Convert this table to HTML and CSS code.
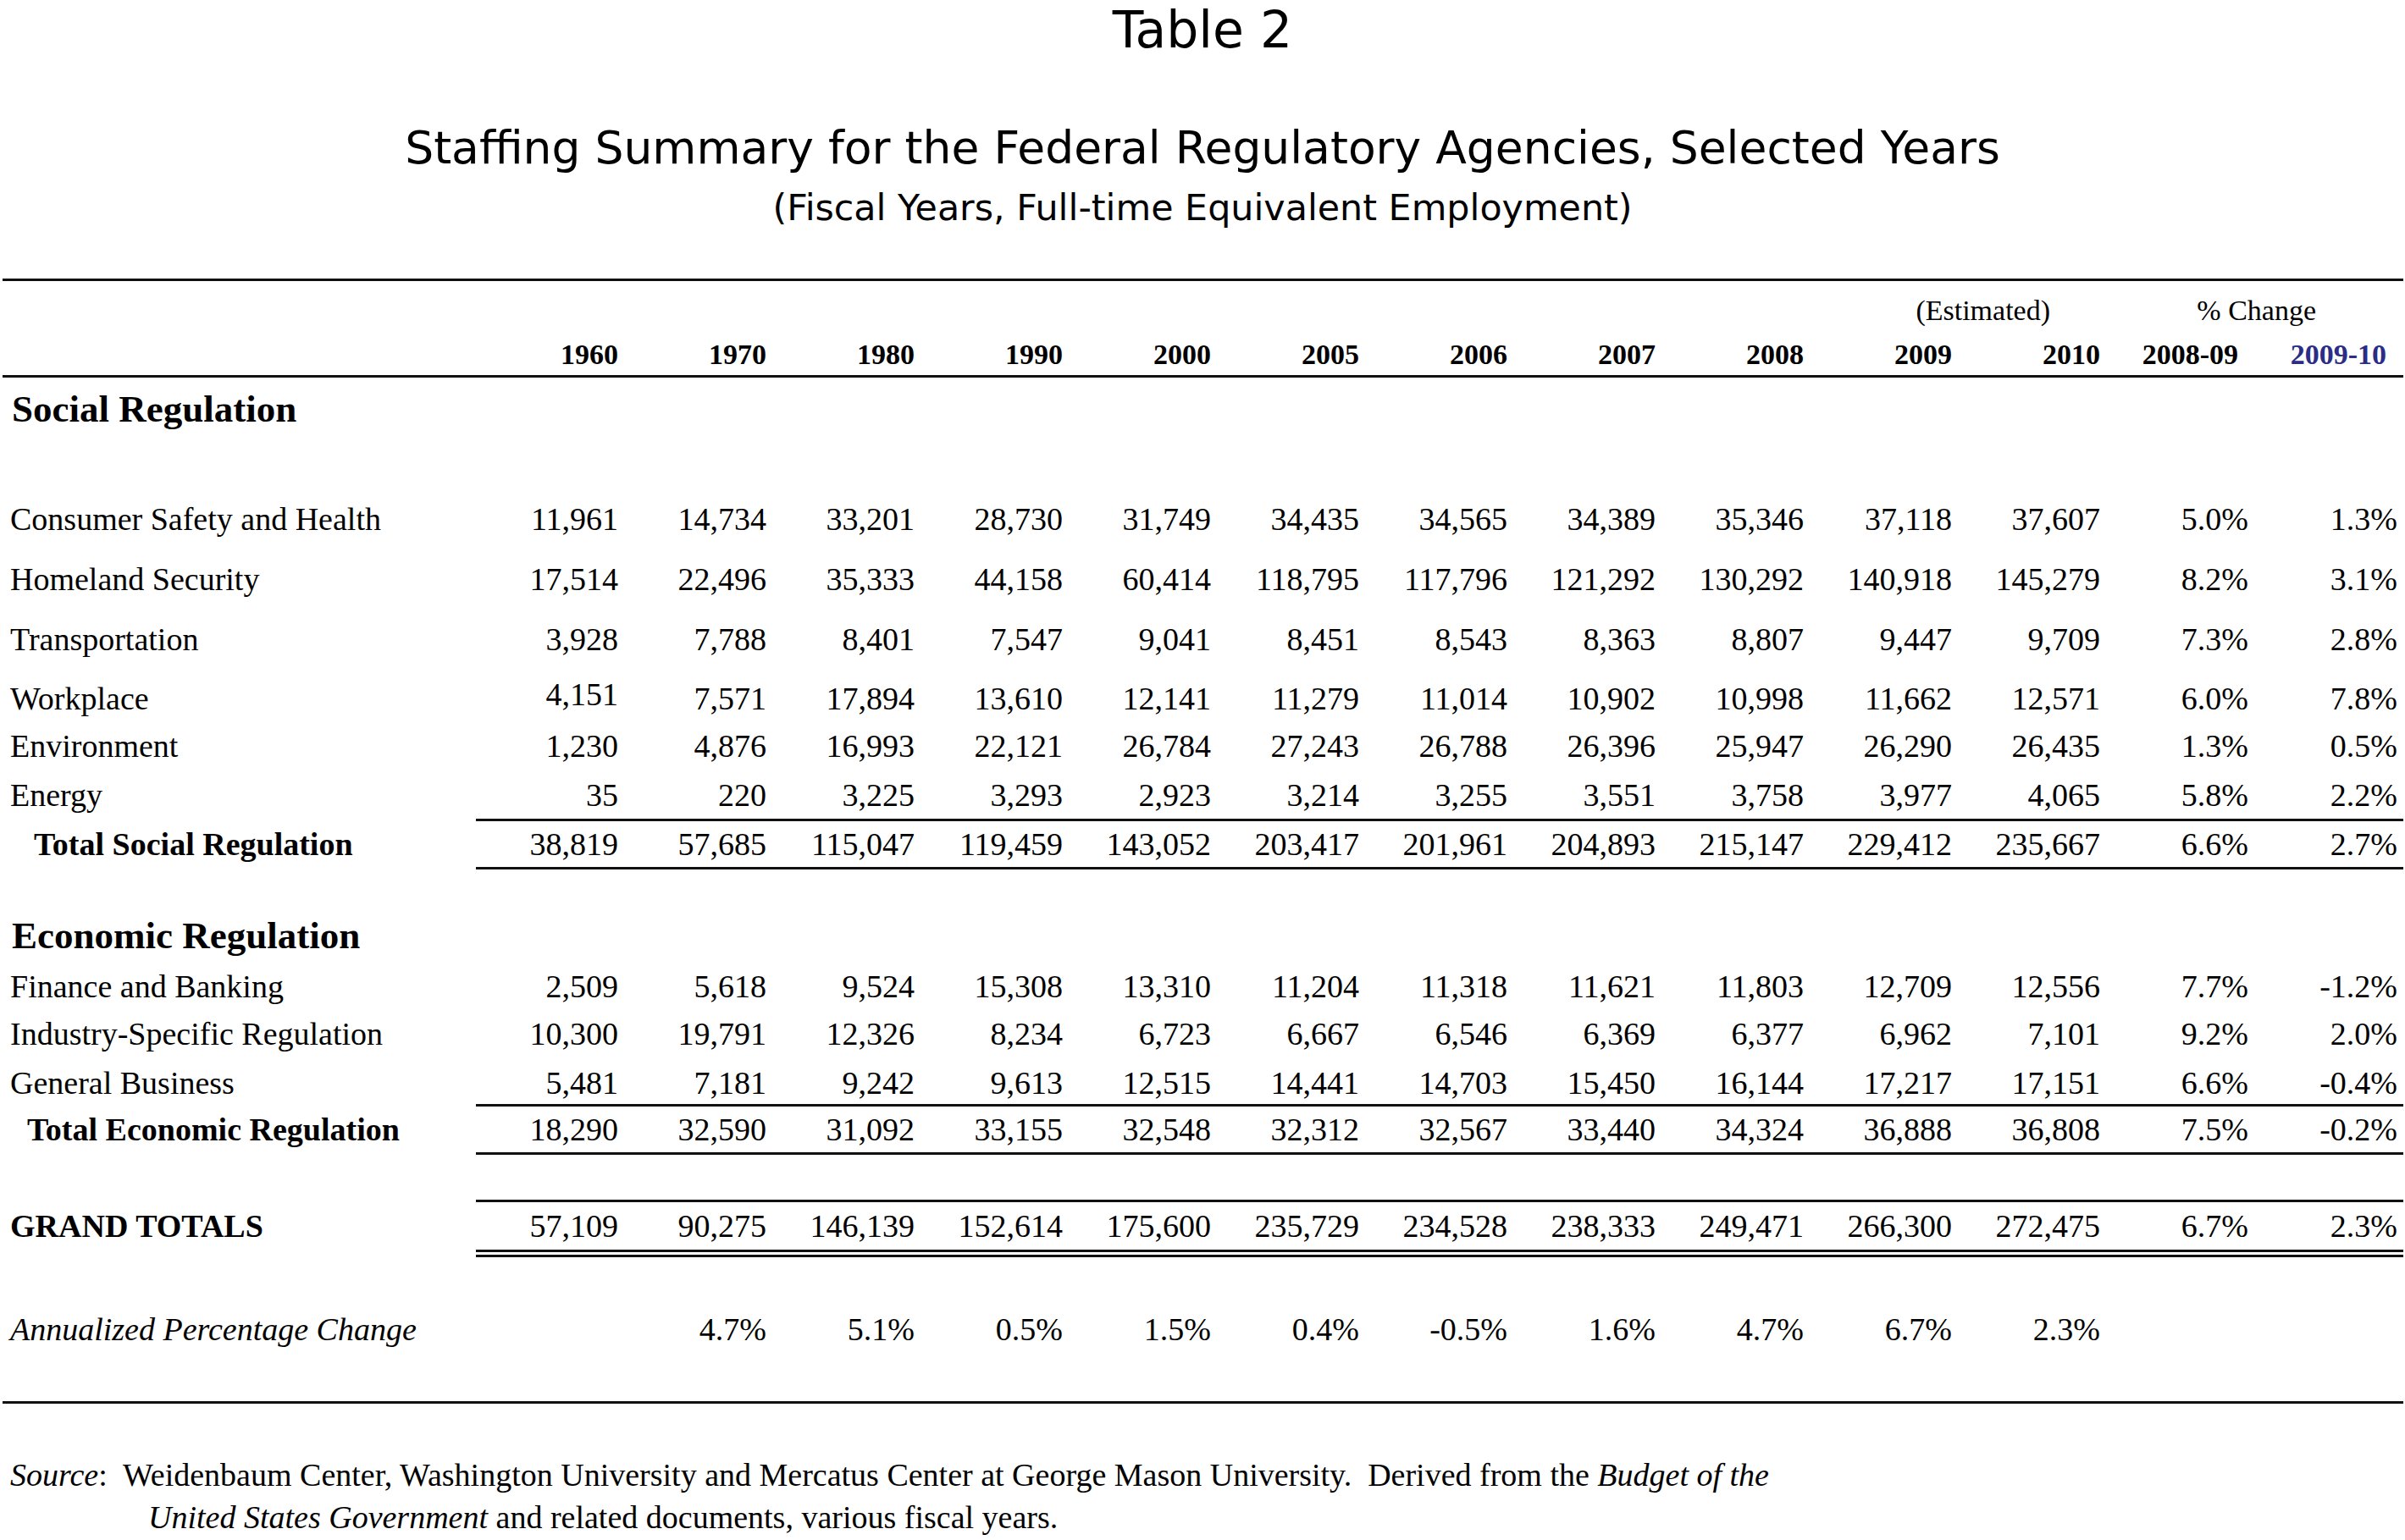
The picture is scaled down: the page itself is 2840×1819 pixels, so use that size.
FILE: index.html
```html
<!DOCTYPE html>
<html lang="en">
<head>
<meta charset="utf-8">
<title>Table 2 - Staffing Summary</title>
<link rel="stylesheet" href="styles.css">
</head>
<body>
<div class="page">
  <header class="titles">
    <h1 class="title">Table 2</h1>
    <h2 class="subtitle">Staffing Summary for the Federal Regulatory Agencies, Selected Years</h2>
    <p class="subsub">(Fiscal Years, Full-time Equivalent Employment)</p>
  </header>

  <section class="table">
    <div class="thead">
      <div class="row">
        <div class="est">(Estimated)</div>
        <div class="chg">% Change</div>
      </div>
      <div class="row years">
        <div class="label"></div>
        <div>1960</div><div>1970</div><div>1980</div><div>1990</div><div>2000</div>
        <div>2005</div><div>2006</div><div>2007</div><div>2008</div><div>2009</div>
        <div>2010</div><div class="pc">2008-09</div><div class="pc last blue">2009-10</div>
      </div>
    </div>

    <div class="tbody">
      <div class="section-head sh-social">Social Regulation</div>

      <div class="row data mt68">
        <div class="label">Consumer Safety and Health</div>
        <div>11,961</div><div>14,734</div><div>33,201</div><div>28,730</div><div>31,749</div><div>34,435</div><div>34,565</div><div>34,389</div><div>35,346</div><div>37,118</div><div>37,607</div><div>5.0%</div><div class="last">1.3%</div>
      </div>
      <div class="row data mt21">
        <div class="label">Homeland Security</div>
        <div>17,514</div><div>22,496</div><div>35,333</div><div>44,158</div><div>60,414</div><div>118,795</div><div>117,796</div><div>121,292</div><div>130,292</div><div>140,918</div><div>145,279</div><div>8.2%</div><div class="last">3.1%</div>
      </div>
      <div class="row data mt21">
        <div class="label">Transportation</div>
        <div>3,928</div><div>7,788</div><div>8,401</div><div>7,547</div><div>9,041</div><div>8,451</div><div>8,543</div><div>8,363</div><div>8,807</div><div>9,447</div><div>9,709</div><div>7.3%</div><div class="last">2.8%</div>
      </div>
      <div class="row data mt20">
        <div class="label">Workplace</div>
        <div><span class="raised">4,151</span></div><div>7,571</div><div>17,894</div><div>13,610</div><div>12,141</div><div>11,279</div><div>11,014</div><div>10,902</div><div>10,998</div><div>11,662</div><div>12,571</div><div>6.0%</div><div class="last">7.8%</div>
      </div>
      <div class="row data mt6">
        <div class="label">Environment</div>
        <div>1,230</div><div>4,876</div><div>16,993</div><div>22,121</div><div>26,784</div><div>27,243</div><div>26,788</div><div>26,396</div><div>25,947</div><div>26,290</div><div>26,435</div><div>1.3%</div><div class="last">0.5%</div>
      </div>
      <div class="row data mt8">
        <div class="label">Energy</div>
        <div>35</div><div>220</div><div>3,225</div><div>3,293</div><div>2,923</div><div>3,214</div><div>3,255</div><div>3,551</div><div>3,758</div><div>3,977</div><div>4,065</div><div>5.8%</div><div class="last">2.2%</div>
      </div>
      <div class="row total mt3">
        <div class="label tl-social">Total Social Regulation</div>
        <div>38,819</div><div>57,685</div><div>115,047</div><div>119,459</div><div>143,052</div><div>203,417</div><div>201,961</div><div>204,893</div><div>215,147</div><div>229,412</div><div>235,667</div><div>6.6%</div><div class="last">2.7%</div>
      </div>

      <div class="section-head sh-econ">Economic Regulation</div>

      <div class="row data mt5">
        <div class="label">Finance and Banking</div>
        <div>2,509</div><div>5,618</div><div>9,524</div><div>15,308</div><div>13,310</div><div>11,204</div><div>11,318</div><div>11,621</div><div>11,803</div><div>12,709</div><div>12,556</div><div>7.7%</div><div class="last">-1.2%</div>
      </div>
      <div class="row data mt6">
        <div class="label">Industry-Specific Regulation</div>
        <div>10,300</div><div>19,791</div><div>12,326</div><div>8,234</div><div>6,723</div><div>6,667</div><div>6,546</div><div>6,369</div><div>6,377</div><div>6,962</div><div>7,101</div><div>9.2%</div><div class="last">2.0%</div>
      </div>
      <div class="row data mt8">
        <div class="label">General Business</div>
        <div>5,481</div><div>7,181</div><div>9,242</div><div>9,613</div><div>12,515</div><div>14,441</div><div>14,703</div><div>15,450</div><div>16,144</div><div>17,217</div><div>17,151</div><div>6.6%</div><div class="last">-0.4%</div>
      </div>
      <div class="row total">
        <div class="label tl-econ">Total Economic Regulation</div>
        <div>18,290</div><div>32,590</div><div>31,092</div><div>33,155</div><div>32,548</div><div>32,312</div><div>32,567</div><div>33,440</div><div>34,324</div><div>36,888</div><div>36,808</div><div>7.5%</div><div class="last">-0.2%</div>
      </div>

      <div class="row grand">
        <div class="label">GRAND TOTALS</div>
        <div>57,109</div><div>90,275</div><div>146,139</div><div>152,614</div><div>175,600</div><div>235,729</div><div>234,528</div><div>238,333</div><div>249,471</div><div>266,300</div><div>272,475</div><div>6.7%</div><div class="last">2.3%</div>
      </div>

      <div class="row data annual">
        <div class="label">Annualized Percentage Change</div>
        <div></div><div>4.7%</div><div>5.1%</div><div>0.5%</div><div>1.5%</div><div>0.4%</div><div>-0.5%</div><div>1.6%</div><div>4.7%</div><div>6.7%</div><div>2.3%</div><div></div><div class="last"></div>
      </div>
    </div>
  </section>

  <p class="source"><i>Source</i>:&nbsp; Weidenbaum Center, Washington University and Mercatus Center at George Mason University.&nbsp; Derived from the <i>Budget of the</i><br><i>United States Government</i> and related documents, various fiscal years.</p>
</div>
</body>
</html>
```

FILE: styles.css
```css
* {
  box-sizing: border-box;
  margin: 0;
  padding: 0;
}

html, body {
  background: #ffffff;
}

body {
  margin: 0;
  width: 2840px;
  height: 1819px;
  overflow: hidden;
  color: #000000;
  font-family: "Liberation Serif", "Times New Roman", serif;
}

.page {
  margin-left: 3px;
  width: 2835px;
}

/* ---------- titles ---------- */
.titles {
  text-align: center;
  font-family: "DejaVu Sans", Verdana, sans-serif;
  font-weight: normal;
  margin-left: -3px;
  width: 2840px;
}

.title {
  font-size: 60px;
  line-height: 70px;
  font-weight: normal;
}

.subtitle {
  margin-top: 74px;
  font-size: 53.5px;
  line-height: 62px;
  font-weight: normal;
}

.subsub {
  margin-top: 14px;
  font-size: 42.8px;
  line-height: 50px;
}

/* ---------- table ---------- */
.table {
  margin-top: 59px;
  border-top: 3px solid #111111;
  border-bottom: 3px solid #111111;
  padding-bottom: 60px;
  font-family: "Liberation Serif", "Times New Roman", serif;
}

.row {
  display: grid;
  grid-template-columns: 559px 168px repeat(11, 175px) 183px;
}

.row > div {
  text-align: right;
  white-space: nowrap;
}

.row > .label {
  text-align: left;
  padding-left: 9px;
}

.row > .last {
  padding-right: 7px;
}

/* header */
.thead {
  padding: 15px 0 4px;
  border-bottom: 3px solid #111111;
  font-size: 34px;
  line-height: 40px;
}

.thead .row + .row {
  margin-top: 12px;
}

.est {
  grid-column: 11 / span 2;
  padding-right: 59px;
}

.chg {
  grid-column: 13 / span 2;
  padding-right: 103px;
}

.years {
  font-weight: bold;
}

.years .pc {
  padding-right: 12px;
}

.years .pc.last {
  padding-right: 20px;
}

.blue {
  color: #2b2d86;
}

/* body */
.tbody {
  font-size: 38px;
}

.section-head {
  font-size: 45px;
  font-weight: bold;
  padding-left: 11px;
}

.sh-social {
  line-height: 74px;
}

.sh-econ {
  margin-top: 48px;
  line-height: 60px;
}

.data {
  line-height: 50px;
}

.raised {
  position: relative;
  top: -5px;
}

.total,
.grand {
  line-height: 54px;
}

.total > div {
  border-top: 3px solid #111111;
  border-bottom: 3px solid #111111;
}

.total > .label {
  border-color: transparent;
  font-weight: bold;
}

.tl-social {
  padding-left: 37px !important;
}

.tl-econ {
  padding-left: 29px !important;
}

.grand {
  margin-top: 53px;
  line-height: 56px;
}

.grand > div {
  border-top: 3px solid #111111;
  border-bottom: 9px double #111111;
}

.grand > .label {
  border-color: transparent;
  font-weight: bold;
}

.annual {
  margin-top: 60px;
}

.annual > .label {
  font-style: italic;
}

.mt3 { margin-top: 3px; }
.mt5 { margin-top: 5px; }
.mt6 { margin-top: 6px; }
.mt8 { margin-top: 8px; }
.mt20 { margin-top: 20px; }
.mt21 { margin-top: 21px; }
.mt68 { margin-top: 68px; }

/* footer */
.source {
  margin-top: 59px;
  margin-left: 9px;
  padding-left: 163px;
  text-indent: -163px;
  font-size: 38px;
  line-height: 50px;
}
```
